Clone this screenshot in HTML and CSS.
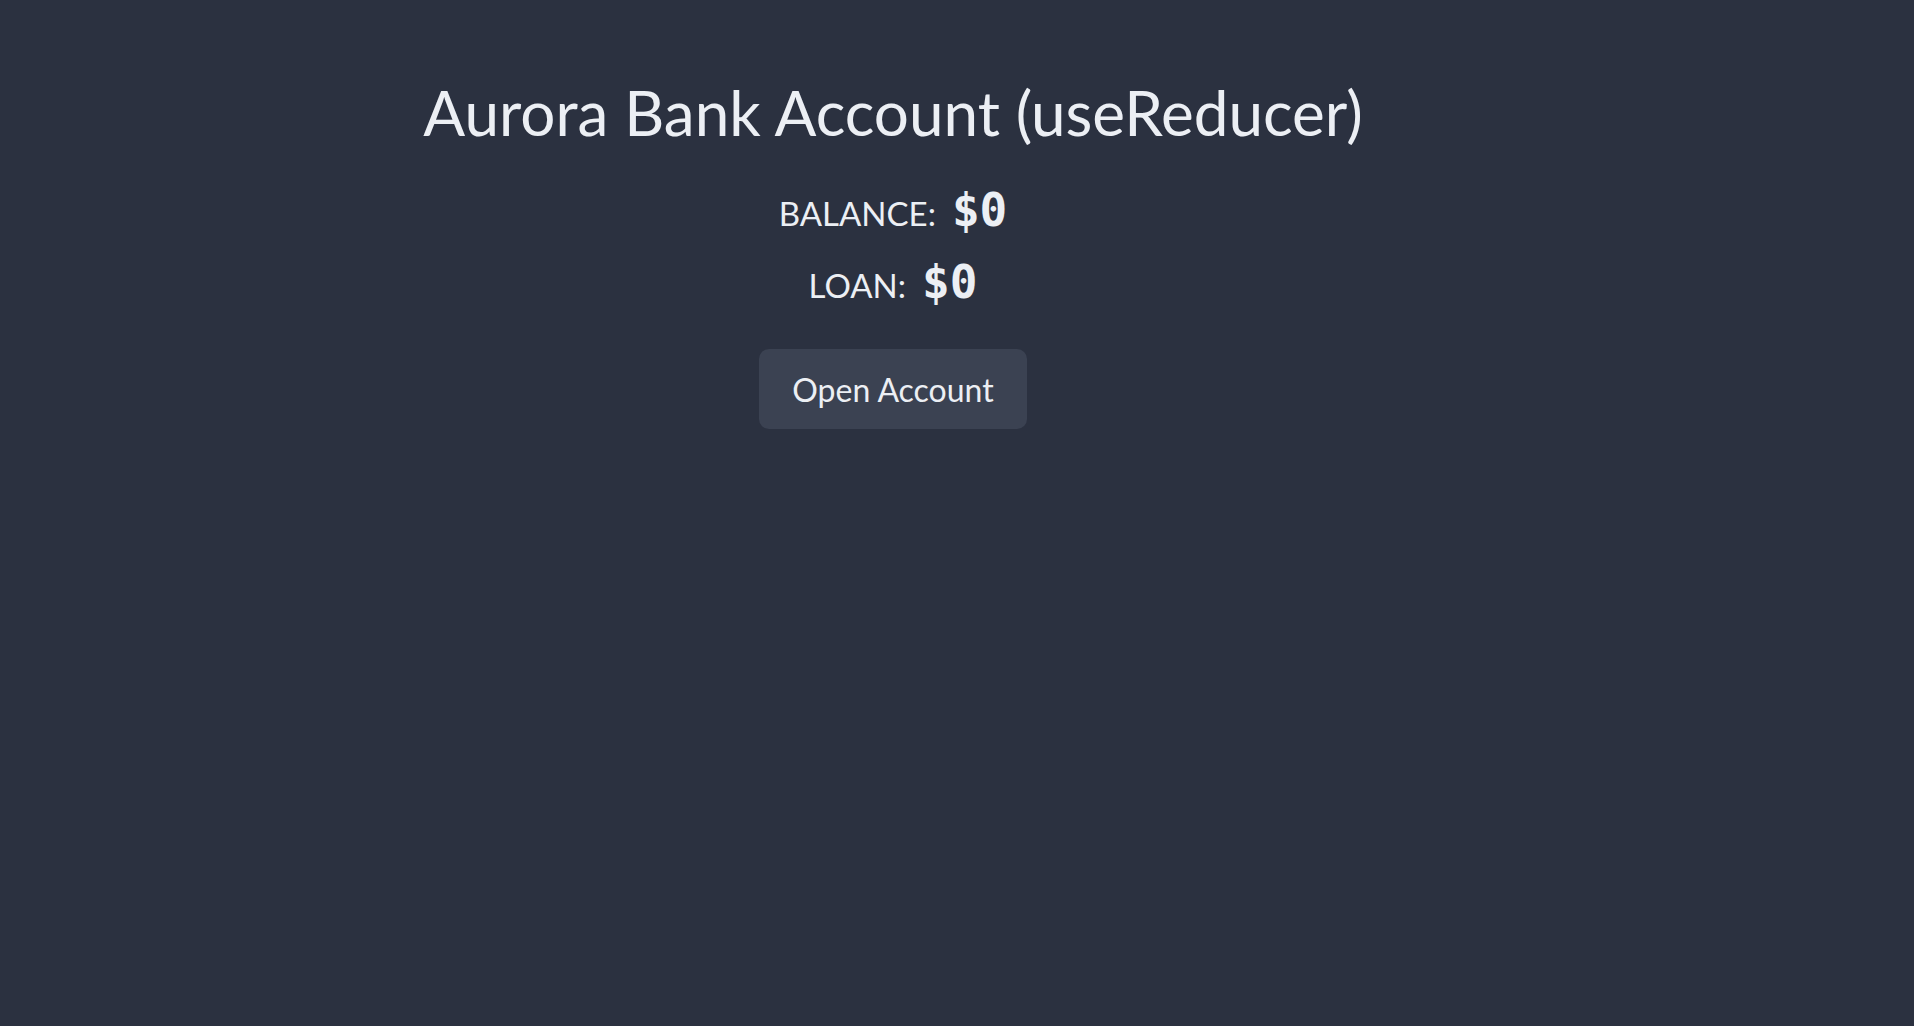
FILE: index.html
```html
<!DOCTYPE html>
<html lang="en">
<head>
<meta charset="utf-8">
<title>Aurora Bank Account</title>
<link rel="stylesheet" href="styles.css">
</head>
<body>
<div class="app">
  <h1 class="title">Aurora Bank Account (useReducer)</h1>
  <p class="row"><span class="label">Balance:</span><span class="value">$0</span></p>
  <p class="row"><span class="label">Loan:</span><span class="value">$0</span></p>
  <div class="actions">
    <button class="btn">Open Account</button>
  </div>
</div>
</body>
</html>
```
FILE: styles.css
```css
html, body {
  margin: 0;
  padding: 0;
  background: #2b3140;
  height: 100%;
}
body {
  font-family: "Lato", "Noto Sans", sans-serif;
  color: #eceff4;
}
.app {
  width: 1786px;
  display: flex;
  flex-direction: column;
  align-items: center;
  padding-top: 75px;
}
.title {
  margin: 0 0 25px;
  font-size: 62px;
  font-weight: 400;
  line-height: 1.2;
}
.row {
  margin: 0;
  display: flex;
  align-items: baseline;
  gap: 16px;
  height: 72px;
  line-height: 72px;
}
.label {
  font-size: 33px;
  text-transform: uppercase;
}
.value {
  font-family: "DejaVu Sans Mono", monospace;
  font-weight: 700;
  font-size: 46px;
}
.actions {
  margin-top: 31px;
}
.btn {
  width: 268px;
  height: 80px;
  border: none;
  border-radius: 10px;
  background: #3b4252;
  color: #eceff4;
  font-family: "Lato", "Noto Sans", sans-serif;
  font-size: 32px;
  cursor: pointer;
}
```
